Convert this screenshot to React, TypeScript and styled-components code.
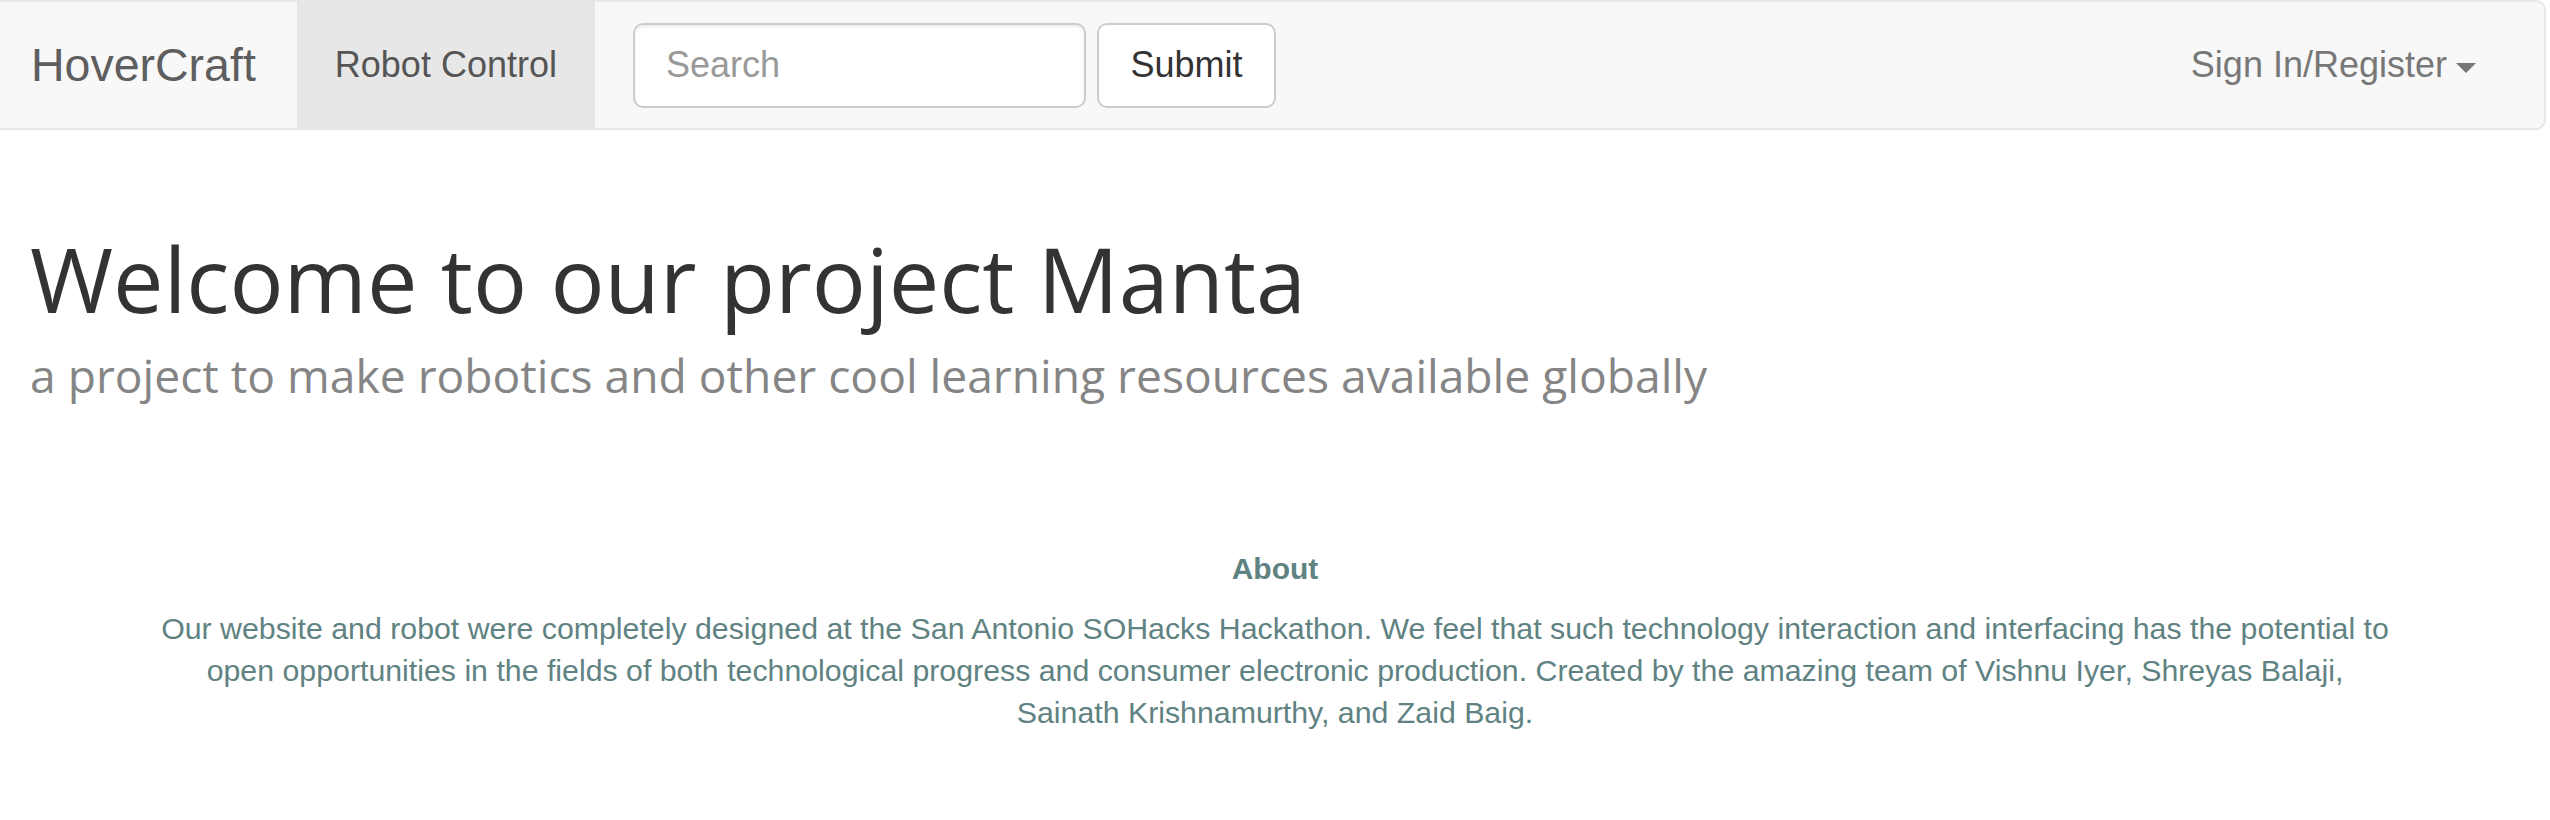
import React from 'react'
import styled, { createGlobalStyle } from 'styled-components'

const GlobalStyle = createGlobalStyle`
  html, body {
    margin: 0;
    padding: 0;
    background: #fff;
  }
  body {
    font-family: "Liberation Sans", Arial, sans-serif;
  }
  * {
    box-sizing: border-box;
  }
`

const Navbar = styled.nav`
  display: flex;
  align-items: stretch;
  height: 130px;
  width: calc(100% - 4px);
  background: #f8f8f8;
  border: 2px solid #e7e7e7;
  border-left: 0;
  border-radius: 0 10px 10px 0;
`

const Brand = styled.a`
  display: flex;
  align-items: center;
  padding: 0 41px 0 31px;
  font-size: 46.5px;
  color: #5e5e5e;
  text-decoration: none;
`

const NavItem = styled.a<{ $active?: boolean }>`
  display: flex;
  align-items: center;
  padding: 0 38px;
  font-size: 36px;
  color: ${p => (p.$active ? '#555' : '#777')};
  background: ${p => (p.$active ? '#e7e7e7' : 'transparent')};
  text-decoration: none;
  cursor: pointer;
`

const SearchForm = styled.form`
  display: flex;
  align-items: center;
  gap: 11px;
  padding: 0 38px;
`

const SearchInput = styled.input`
  width: 453px;
  height: 85px;
  padding: 0 31px;
  font-family: "Liberation Sans", Arial, sans-serif;
  font-size: 36px;
  color: #555;
  background: #fff;
  border: 2px solid #ccc;
  border-radius: 10px;
  box-shadow: inset 0 2px 3px rgba(0, 0, 0, 0.075);
  outline: none;
  &::placeholder {
    color: #999;
  }
`

const SubmitButton = styled.button`
  width: 179px;
  height: 85px;
  font-family: "Liberation Sans", Arial, sans-serif;
  font-size: 36px;
  color: #333;
  background: #fff;
  border: 2px solid #ccc;
  border-radius: 10px;
  cursor: pointer;
`

const RightNav = styled.div`
  display: flex;
  margin-left: auto;
  padding-right: 30px;
`

const Caret = styled.span`
  display: inline-block;
  width: 0;
  height: 0;
  margin-left: 9px;
  margin-top: 6px;
  border-top: 10px solid #777;
  border-left: 10px solid transparent;
  border-right: 10px solid transparent;
`

const Hero = styled.header`
  padding: 98px 30px 0;
`

const Title = styled.h1`
  margin: 0;
  font-family: "Open Sans", sans-serif;
  font-weight: 400;
  font-size: 90px;
  line-height: 101px;
  color: #333;
`

const Subtitle = styled.h3`
  margin: 21px 0 0;
  font-family: "Open Sans", sans-serif;
  font-weight: 400;
  font-size: 46.2px;
  line-height: 51px;
  color: #858585;
`

const About = styled.section`
  width: 2240px;
  margin: 147px auto 0;
  text-align: center;
  color: #5f8282;
  font-size: 30.3px;
  line-height: 42px;
`

const AboutTitle = styled.h4`
  margin: 0 0 18px;
  font-size: 30px;
  font-weight: 700;
  line-height: 42px;
`

const AboutText = styled.p`
  margin: 0;
`

export default function App() {
  return (
    <>
      <GlobalStyle />
      <Navbar>
        <Brand href="#">HoverCraft</Brand>
        <NavItem $active>Robot Control</NavItem>
        <SearchForm onSubmit={e => e.preventDefault()}>
          <SearchInput type="text" placeholder="Search" />
          <SubmitButton type="submit">Submit</SubmitButton>
        </SearchForm>
        <RightNav>
          <NavItem>
            Sign In/Register
            <Caret />
          </NavItem>
        </RightNav>
      </Navbar>
      <Hero>
        <Title>Welcome to our project Manta</Title>
        <Subtitle>a project to make robotics and other cool learning resources available globally</Subtitle>
      </Hero>
      <About>
        <AboutTitle>About</AboutTitle>
        <AboutText>
          Our website and robot were completely designed at the San Antonio SOHacks Hackathon. We feel that such
          technology interaction and interfacing has the potential to open opportunities in the fields of both
          technological progress and consumer electronic production. Created by the amazing team of Vishnu Iyer,
          Shreyas Balaji, Sainath Krishnamurthy, and Zaid Baig.
        </AboutText>
      </About>
    </>
  )
}
